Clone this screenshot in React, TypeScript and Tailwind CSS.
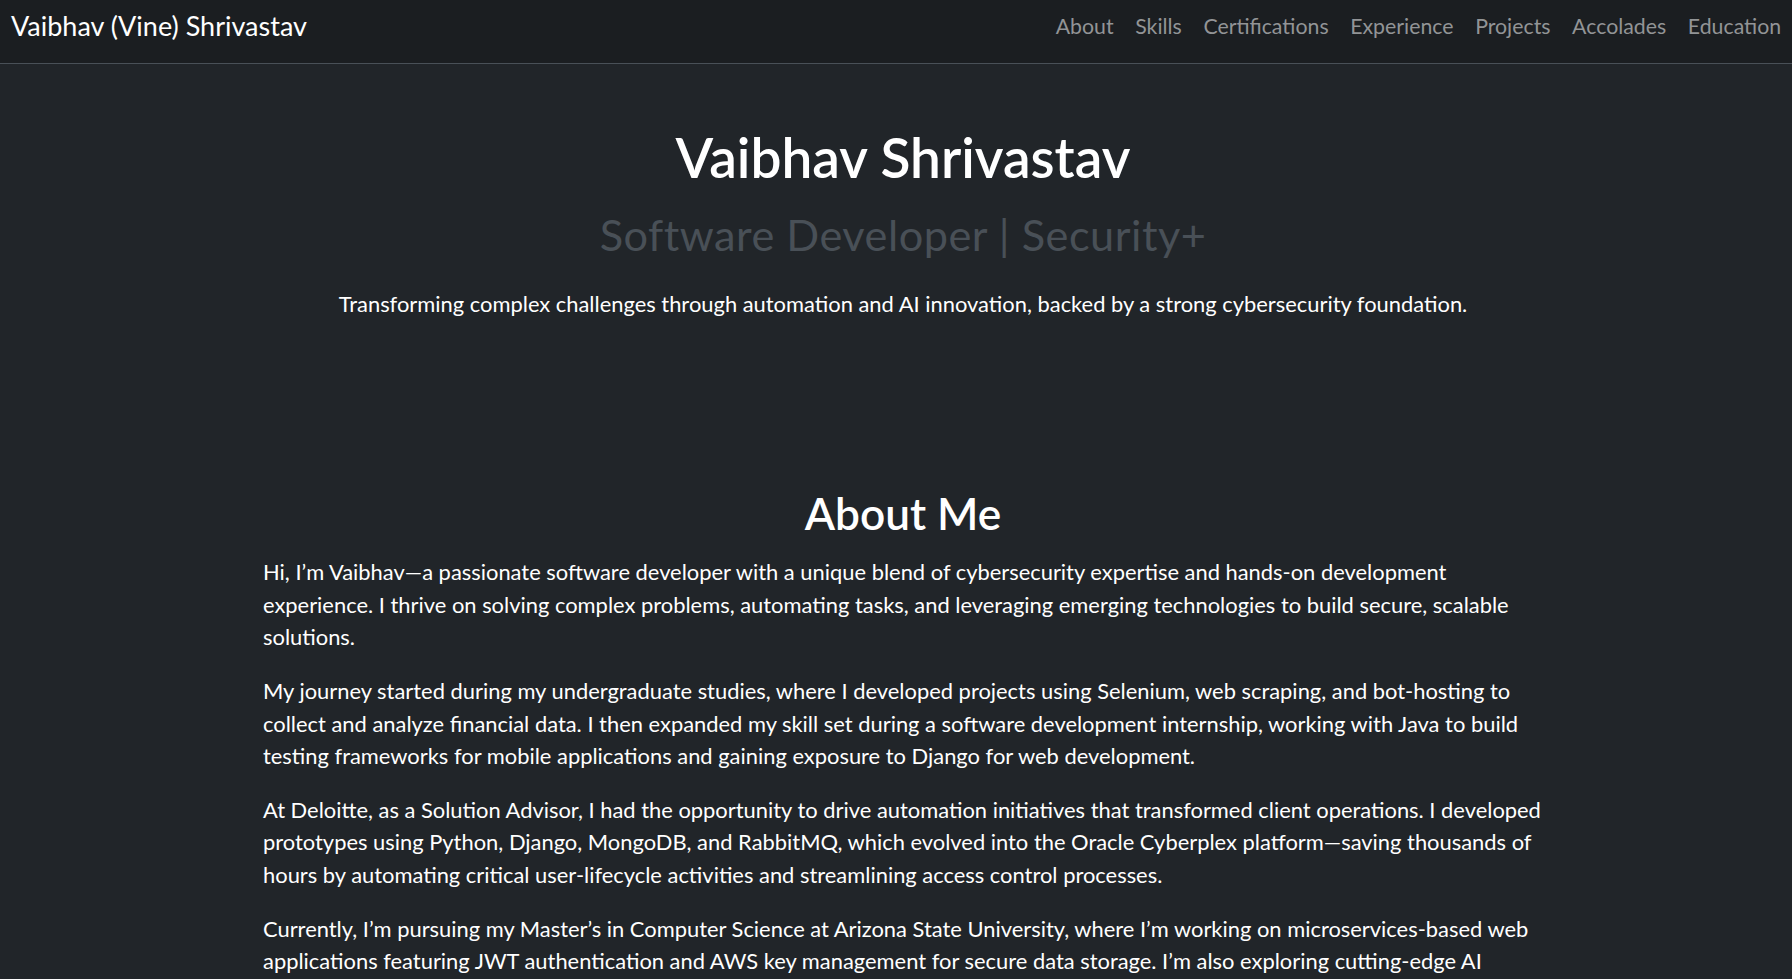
import React from "react";

const font = { fontFamily: '"Lato", "Liberation Sans", sans-serif' };

const links = ["About", "Skills", "Certifications", "Experience", "Projects", "Accolades", "Education"];

const paras: string[][] = [
  [
    "Hi, I’m Vaibhav—a passionate software developer with a unique blend of cybersecurity expertise and hands-on development",
    "experience. I thrive on solving complex problems, automating tasks, and leveraging emerging technologies to build secure, scalable",
    "solutions.",
  ],
  [
    "My journey started during my undergraduate studies, where I developed projects using Selenium, web scraping, and bot-hosting to",
    "collect and analyze financial data. I then expanded my skill set during a software development internship, working with Java to build",
    "testing frameworks for mobile applications and gaining exposure to Django for web development.",
  ],
  [
    "At Deloitte, as a Solution Advisor, I had the opportunity to drive automation initiatives that transformed client operations. I developed",
    "prototypes using Python, Django, MongoDB, and RabbitMQ, which evolved into the Oracle Cyberplex platform—saving thousands of",
    "hours by automating critical user-lifecycle activities and streamlining access control processes.",
  ],
  [
    "Currently, I’m pursuing my Master’s in Computer Science at Arizona State University, where I’m working on microservices-based web",
    "applications featuring JWT authentication and AWS key management for secure data storage. I’m also exploring cutting-edge AI",
  ],
];

export default function App() {
  return (
    <div className="min-h-screen bg-[#212529] text-[#f8f9fa]" style={font}>
      <nav className="h-[64px] bg-[#1b1e21] border-b border-[#495057] flex items-start justify-between pl-[11px] pt-[12px]">
        <a className="text-[27px] text-white leading-none">Vaibhav (Vine) Shrivastav</a>
        <ul className="flex items-start mt-[4px]">
          {links.map((l) => (
            <li key={l}>
              <a className="block px-[10.8px] text-[21.3px] leading-none text-[#929496]">{l}</a>
            </li>
          ))}
        </ul>
      </nav>

      <div className="pl-[14px]">
        <header className="text-center pt-[60px] pb-[166px]">
          <h1 className="text-[55px] leading-[1.2] font-semibold text-white">Vaibhav Shrivastav</h1>
          <h2 className="mt-[19px] text-[43.3px] leading-[1.2] font-normal tracking-[0.5px] text-[#495057]">
            Software Developer | Security+
          </h2>
          <p className="mt-[27px] text-[21.9px] leading-[32.4px] text-white">
            Transforming complex challenges through automation and AI innovation, backed by a strong cybersecurity foundation.
          </p>
        </header>

        <section className="mx-auto w-[1280px]">
          <h2 className="text-center text-[44.2px] leading-[1.2] font-semibold text-white mb-[17px]">About Me</h2>
          {paras.map((p, i) => (
            <p key={i} className="text-[21.9px] leading-[32.4px] mb-[21.6px] text-white">
              {p.map((line, j) => (
                <span key={j} className="block whitespace-nowrap">
                  {line}
                </span>
              ))}
            </p>
          ))}
        </section>
      </div>
    </div>
  );
}
